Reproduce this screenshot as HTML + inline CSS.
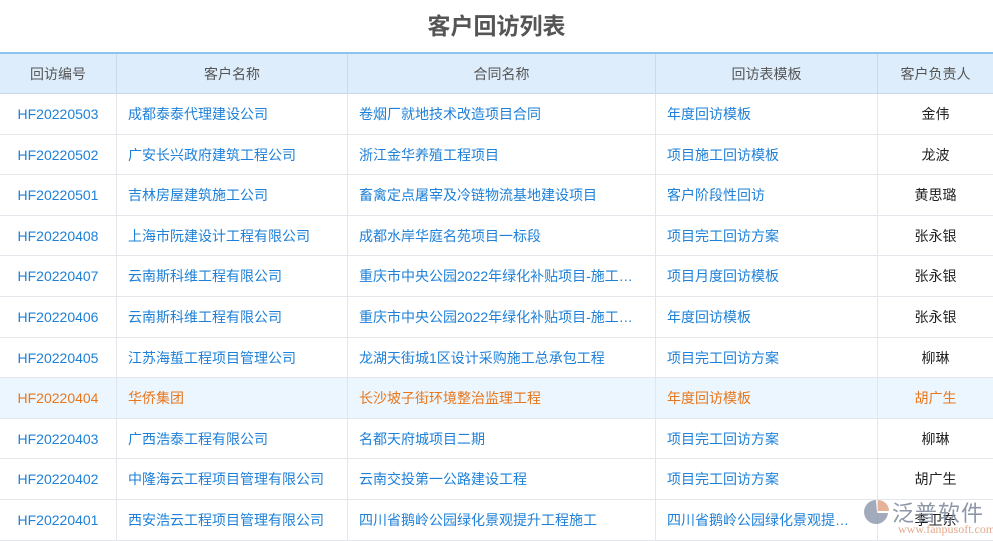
<!DOCTYPE html>
<html><head><meta charset="utf-8"><style>
body{margin:0;width:993px;height:541px;overflow:hidden;background:#fff;font-family:"Liberation Sans","Noto Sans CJK SC",sans-serif;position:relative}
h1{margin:0;height:52px;line-height:52px;text-align:center;font-size:23px;color:#555;font-weight:bold}
.r{position:absolute;left:0;width:993px;display:flex;font-size:14px;border-bottom:1px solid #e3e6ea;box-sizing:border-box}
.r div{box-sizing:border-box;border-left:1px solid #e3e6ea;display:flex;align-items:center;padding-left:11px;white-space:nowrap;overflow:hidden;color:#1e80d8;line-height:16px}
.r div span{overflow:hidden;text-overflow:ellipsis}
.r div:nth-child(1){width:116px;border-left:none;justify-content:center;padding:0}
.r div:nth-child(2){width:231px}
.r div:nth-child(3){width:308px}
.r div:nth-child(4){width:222px}
.r div:nth-child(5){width:116px;justify-content:center;padding:0;color:#222}
.hd{top:52px;height:42px;background:#deedfb;border-top:2px solid #8cc3ef;border-bottom:1px solid #c9dbeb}
.hd div{color:#555!important;justify-content:center;padding:0!important;border-left-color:#c9dbeb!important}
.hl{background:#ebf6ff}
.hl div{color:#e8761b!important}
.wm{position:absolute;left:862px;top:497px;width:130px;height:44px}
</style></head><body>
<h1>客户回访列表</h1>
<div class="r hd"><div>回访编号</div><div>客户名称</div><div>合同名称</div><div>回访表模板</div><div>客户负责人</div></div>
<div class="r" style="top:94px;height:41px"><div>HF20220503</div><div>成都泰泰代理建设公司</div><div>卷烟厂就地技术改造项目合同</div><div>年度回访模板</div><div>金伟</div></div>
<div class="r" style="top:135px;height:40px"><div>HF20220502</div><div>广安长兴政府建筑工程公司</div><div>浙江金华养殖工程项目</div><div>项目施工回访模板</div><div>龙波</div></div>
<div class="r" style="top:175px;height:41px"><div>HF20220501</div><div>吉林房屋建筑施工公司</div><div>畜禽定点屠宰及冷链物流基地建设项目</div><div>客户阶段性回访</div><div>黄思璐</div></div>
<div class="r" style="top:216px;height:40px"><div>HF20220408</div><div>上海市阮建设计工程有限公司</div><div>成都水岸华庭名苑项目一标段</div><div>项目完工回访方案</div><div>张永银</div></div>
<div class="r" style="top:256px;height:41px"><div>HF20220407</div><div>云南斯科维工程有限公司</div><div><span>重庆市中央公园2022年绿化补贴项目-施工…</span></div><div>项目月度回访模板</div><div>张永银</div></div>
<div class="r" style="top:297px;height:41px"><div>HF20220406</div><div>云南斯科维工程有限公司</div><div><span>重庆市中央公园2022年绿化补贴项目-施工…</span></div><div>年度回访模板</div><div>张永银</div></div>
<div class="r" style="top:338px;height:40px"><div>HF20220405</div><div>江苏海蜇工程项目管理公司</div><div>龙湖天街城1区设计采购施工总承包工程</div><div>项目完工回访方案</div><div>柳琳</div></div>
<div class="r hl" style="top:378px;height:41px"><div>HF20220404</div><div>华侨集团</div><div>长沙坡子街环境整治监理工程</div><div>年度回访模板</div><div>胡广生</div></div>
<div class="r" style="top:419px;height:40px"><div>HF20220403</div><div>广西浩泰工程有限公司</div><div>名都天府城项目二期</div><div>项目完工回访方案</div><div>柳琳</div></div>
<div class="r" style="top:459px;height:41px"><div>HF20220402</div><div>中隆海云工程项目管理有限公司</div><div>云南交投第一公路建设工程</div><div>项目完工回访方案</div><div>胡广生</div></div>
<div class="r" style="top:500px;height:41px"><div>HF20220401</div><div>西安浩云工程项目管理有限公司</div><div>四川省鹅岭公园绿化景观提升工程施工</div><div><span>四川省鹅岭公园绿化景观提…</span></div><div>李卫东</div></div>
<div class="wm">
<svg width="30" height="30" style="position:absolute;left:0;top:0" viewBox="0 0 30 30"><path d="M14 3 A12 12 0 1 0 26 16 L15 16 Z" fill="#8a96aa" opacity=".8"/><path d="M16 3 A11 11 0 0 1 27 14 L16 14Z" fill="#e0a080" opacity=".8"/></svg>
<div style="position:absolute;left:30px;top:-1px;font-size:22px;color:#7a8699;opacity:.85;letter-spacing:1px">泛普软件</div>
<div style="position:absolute;left:36px;top:25px;font-size:12px;font-family:'Liberation Serif',serif;color:#e0a080;opacity:.9">www.fanpusoft.com</div>
</div>
</body></html>
